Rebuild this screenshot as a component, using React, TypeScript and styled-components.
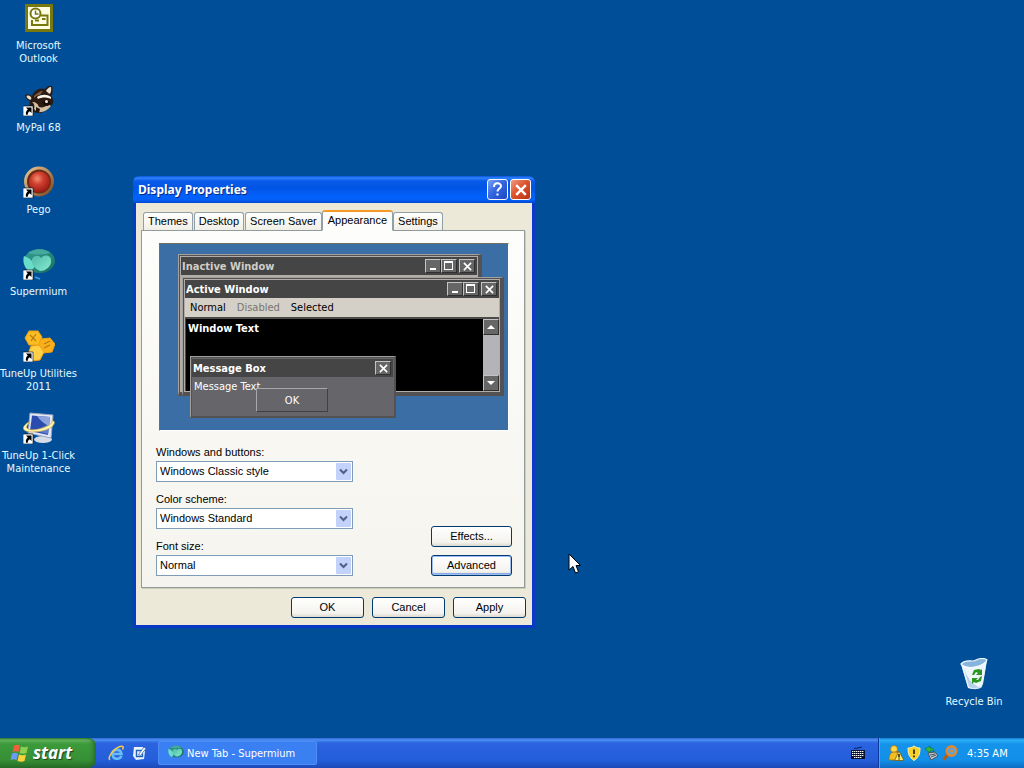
import React from 'react';
import styled, { createGlobalStyle, css } from 'styled-components';

const tahoma = '"DejaVu Sans Condensed", "DejaVu Sans", "Noto Sans", sans-serif';
const sans = '"Liberation Sans", Arial, sans-serif';
const caption = '"Noto Sans", "Open Sans", sans-serif';

const GlobalStyle = createGlobalStyle`
  *, *::before, *::after { box-sizing: border-box; }
  body { margin: 0; background: #004e98; }
  button, select { font: inherit; color: inherit; margin: 0; }
`;

const Screen = styled.div`
  min-height: 100vh;
  display: flex;
  flex-direction: column;
  background: #004e98;
  font: 11px/13px ${tahoma};
  overflow: hidden;
`;

const Desktop = styled.main`
  position: relative;
  flex: 1;
  display: flex;
  justify-content: space-between;
`;

/* ---------- desktop shortcuts ---------- */

const IconColumn = styled.div<{ $end?: boolean }>`
  display: flex;
  flex-direction: column;
  width: ${p => (p.$end ? 100 : 77)}px;
  padding-top: 2px;
  ${p => p.$end && css`
    justify-content: flex-end;
    padding-bottom: 30px;
    > button { height: auto; }
  `}
`;

const Shortcut = styled.button`
  display: flex;
  flex-direction: column;
  align-items: center;
  gap: 5px;
  height: 82px;
  padding: 0;
  border: 0;
  background: none;
  color: #e4fbff;
  text-align: center;
  white-space: pre-line;
`;

const ShortcutLabel = styled.span`
  display: block;
`;

const ShortcutArrow = () => (
  <g>
    <path d="M0 22h10v10H0z" fill="#fff" stroke="#000" strokeWidth="0.6" />
    <path d="M3 23.5h5.5v5.500l-1.800-1.800c-1.400 1-2 2-1.900 3.600H3c-.6-2.200 .3-3.900 1.800-5.300z" fill="#000" />
  </g>
);

const OutlookIcon = () => (
  <svg width="32" height="32" viewBox="0 0 32 32" aria-hidden="true">
    <path d="M3.500 3.500h25v25h-25z" fill="#fdfde4" stroke="#77790f" strokeWidth="3" />
    <circle cx="12.500" cy="11.500" r="5" fill="#fff" stroke="#77790f" strokeWidth="2" />
    <path d="M12.500 8.500v3.500h3" fill="none" stroke="#77790f" strokeWidth="1.500" />
    <path d="M18 13.500h6.500v9.500H9v-5" fill="none" stroke="#77790f" strokeWidth="2" />
    <path d="M12 18.500h4M19 17h3.500" fill="none" stroke="#77790f" strokeWidth="2" />
  </svg>
);

const RaccoonIcon = () => (
  <svg width="32" height="32" viewBox="0 0 32 32" aria-hidden="true">
    <path d="M2 11c3-2 5 0 7 1 2-6 8-9 13-7 2-3 5-4 7-3 1 4 1 8-1 10 3 3 3 7 0 10-3 5-12 9-17 6-4-2-5-7-4-11-3-1-5-3-5-6z" fill="#2b1b12" />
    <path d="M3.500 12c2-1 4 0 5 2l-1 2c-2-1-4-2-4-4zM23 7c1-2 3-4 5-4 .5 3 0 6-1.500 7z" fill="#eadfcb" />
    <path d="M11 12c3-3 6-5 9-5l-3 4c-2 0-4 1-6 3z" fill="#7a5c44" />
    <path d="M14 13c5-3 10-3 14 0v2c-4-2-9-2-13 0z" fill="#fff7e8" />
    <path d="M9 18c2 1 3 4 2 7l3 3c6 1 11-2 14-6l-3-2c-2 3-6 4-9 3-1-3-3-5-7-5z" fill="#d3c0a4" />
    <path d="M19 18c4-2 7-1 9 1l-3 3c-2 0-5-1-6-4z" fill="#170e0b" />
    <circle cx="23.500" cy="17.500" r="1.500" fill="#f5ead7" />
    <path d="M13 23l4 2-1 4-3-1z" fill="#24150e" />
    <ShortcutArrow />
  </svg>
);

const PegoIcon = () => (
  <svg width="32" height="32" viewBox="0 0 32 32" aria-hidden="true">
    <defs>
      <radialGradient id="redBall" cx=".4" cy=".34" r=".7">
        <stop stopColor="#f58e74" /><stop offset=".4" stopColor="#d04030" /><stop offset="1" stopColor="#94180f" />
      </radialGradient>
      <linearGradient id="wood" x2="1" y2="1">
        <stop stopColor="#e9cf9a" /><stop offset=".55" stopColor="#b08050" /><stop offset="1" stopColor="#6f4020" />
      </linearGradient>
    </defs>
    <circle cx="16" cy="15.500" r="15" fill="url(#wood)" />
    <circle cx="16" cy="15.500" r="12" fill="#6c2a14" />
    <circle cx="16.500" cy="16" r="10.500" fill="url(#redBall)" />
    <ShortcutArrow />
  </svg>
);

const Globe = ({ size, arrow }: { size: number; arrow?: boolean }) => (
  <svg width={size} height={size} viewBox="0 0 32 32" aria-hidden="true">
    <defs>
      <linearGradient id="teal" x2="1" y2="1">
        <stop stopColor="#2f9c96" /><stop offset=".7" stopColor="#23806f" /><stop offset="1" stopColor="#1b5f66" />
      </linearGradient>
      <linearGradient id="mint" y2="1">
        <stop stopColor="#4fb8a8" /><stop offset="1" stopColor="#86ecd0" />
      </linearGradient>
    </defs>
    <ellipse cx="16.500" cy="13" rx="15.500" ry="12" fill="url(#teal)" />
    <path d="M1 8c4 1 8 4 11 9-1 3-3 6-5 7C2 21-1 14 1 8z" fill="#6adcca" />
    <path d="M9 11c2-4 7-4 9-1 3-4 10-3 10 2 1 6-5 11-11 11-5-2-9-7-8-12z" fill="url(#mint)" />
    <path d="M5 5C12 0 22 0 27 5 20 7 11 7 5 5z" fill="#45a99c" />
    {arrow && <path d="M12 29l5 2" stroke="#38a0dc" strokeWidth="1.500" />}
    {arrow && <ShortcutArrow />}
  </svg>
);

const HexagonsIcon = () => (
  <svg width="32" height="32" viewBox="0 0 32 32" aria-hidden="true">
    <g stroke="#f0a010" strokeWidth="1" strokeLinejoin="round">
      <path d="M6 1h9l4 6-3 8H6L2 8z" fill="#fcbc24" />
      <path d="M18 9l9-1 5 6-3 8-9 1-5-7z" fill="#fbb01a" />
      <path d="M8 16l8-1 5 7-4 8-8 1-4-7z" fill="#ffd045" />
    </g>
    <path d="M7 5l6 6M13 4l-5 7M21 14l6-3M21 18l6-3" stroke="#b87a10" strokeWidth="1.200" />
    <ShortcutArrow />
  </svg>
);

const MonitorIcon = () => (
  <svg width="32" height="32" viewBox="0 0 32 32" aria-hidden="true">
    <ellipse cx="20" cy="27.500" rx="9" ry="3.500" fill="#d6dbe8" />
    <path d="M7 1l23 2-2 23L5 21z" fill="#e4e9f4" stroke="#9aa6c4" strokeWidth="1" />
    <path d="M9 3.500l18 1.500-2 18L7 19z" fill="#2a4cae" />
    <path d="M14 4l13 1-1 9c-5-2-9-6-12-10z" fill="#8ea4dc" />
    <path d="M13 19c5-4 9-5 13-6l-1 9z" fill="#5f7dd0" />
    <path d="M6 10c-9 5-7 10 3 10 10 0 20-3 22-8 1-2 0-3-2-4 1 3-2 5-7 7-7 3-16 4-18 1-1-1 0-3 2-5z" fill="#fff3ae" stroke="#c0a040" strokeWidth=".6" />
    <ShortcutArrow />
  </svg>
);

const RecycleIcon = () => (
  <svg width="32" height="32" viewBox="0 0 32 32" aria-hidden="true">
    <path d="M3 6l26-4-5 27c-4 3-10 3-14 0z" fill="#cfe3f2" />
    <path d="M3 6c6 5 19 4 26-4l-4 24c-3 4-11 6-15 4z" fill="#edf6fb" />
    <path d="M3 6C9 0 14 5 18 2c4-2 9-2 11 0-3 6-19 11-26 4z" fill="#86b4dc" stroke="#f2faff" strokeWidth="1.200" />
    <path d="M6 10l5 19c4 2 8 1 10 0C14 26 9 20 6 10z" fill="#b4d2e9" />
    <g fill="#2c9421">
      <path d="M14 17l2-5 5-1 2 1 1-1v6h-6l2-2-2-1-2 3z" />
      <path d="M24 18l-1 5-5 2-2-1-2 2 0-6h6l-2 2 2 0 2-3z" />
    </g>
  </svg>
);

/* ---------- dialog ---------- */

const Dialog = styled.section`
  position: absolute;
  left: 133px;
  top: 176px;
  width: 402px;
  padding: 0 3px 3px;
  border-radius: 6px 6px 0 0;
  background: #0939c6;
  font: 11px/13px ${sans};
  color: #000;
`;

const TitleBar = styled.header`
  display: flex;
  align-items: center;
  gap: 2px;
  height: 27px;
  margin: 0 -3px;
  padding: 0 4px 0 5px;
  border-radius: 6px 6px 0 0;
  background: linear-gradient(#0a53dc 0, #2d84fb 2px, #0a5ae8 5px, #0055e5 12px, #0261fb 20px, #0260f8 24px, #0147d0 27px);
`;

const Title = styled.h1`
  flex: 1;
  margin: 0;
  font: bold 12px/16px ${caption};
  color: #fff;
  text-shadow: 1px 1px 0 #0a2a85;
`;

const CaptionButton = styled.button<{ $close?: boolean }>`
  display: grid;
  place-items: center;
  width: 21px;
  height: 21px;
  padding: 0;
  border: 1px solid #fff;
  border-radius: 3px;
  background: ${p => (p.$close
    ? 'linear-gradient(135deg, #ee9a80, #dd5430 45%, #b93312)'
    : 'linear-gradient(135deg, #7da3f5, #3467e0 45%, #1c47c0)')};
`;

const DialogBody = styled.div`
  display: flex;
  flex-direction: column;
  padding: 7px 7px 7px 5px;
  background: #ece9d8;
`;

const Tabs = styled.div`
  display: flex;
  align-items: flex-end;
  gap: 1px;
  height: 21px;
  padding-left: 2px;
  margin-bottom: -1px;
`;

const Tab = styled.button<{ $active?: boolean }>`
  position: relative;
  height: 19px;
  padding: 0 4px;
  border: 1px solid #91a0a6;
  border-bottom-color: #919b9c;
  border-radius: 3px 3px 0 0;
  background: linear-gradient(#fff, #f0efe6);
  white-space: nowrap;
  ${p => p.$active && css`
    z-index: 1;
    height: 21px;
    margin: 0 -1px;
    padding: 0 5px 2px;
    border-top: 2px solid #f59a28;
    border-bottom-color: #fdfdfb;
    background: #fdfdfb;
  `}
`;

const Panel = styled.div`
  padding: 12px 12px 11px 14px;
  border: 1px solid #919b9c;
  box-shadow: 1px 1px 0 #d0ceb9;
  background: linear-gradient(#fdfdfb, #f5f4ee);
`;

const Preview = styled.div`
  position: relative;
  height: 188px;
  margin: 0 3px;
  border: 1px solid;
  border-color: #716f64 #fff #fff #716f64;
  background: #3a6ea5;
  font: 11px/13px ${tahoma};
  color: #fff;
`;

const MiniWindow = styled.div<{ $x: number; $y: number; $w: number; $h: number; $message?: boolean }>`
  position: absolute;
  left: ${p => p.$x}px;
  top: ${p => p.$y}px;
  width: ${p => p.$w}px;
  height: ${p => p.$h}px;
  display: flex;
  flex-direction: column;
  padding: 1px;
  border: 1px solid;
  border-width: ${p => (p.$message ? '1px 2px 2px 1px' : '1px 4px 4px 1px')};
  border-color: #a3a09d #545152 #545152 #a3a09d;
  background: ${p => (p.$message ? '#66666a' : '#b1aca7')};
  box-shadow: inset 1px 1px 0 #545152;
  ${p => p.$message && css`padding: 2px 1px 1px 1px;`}
  ${p => !p.$message && css`padding: 2px 1px 1px 2px;`}
`;

const MiniTitle = styled.div<{ $dim?: boolean }>`
  display: flex;
  align-items: center;
  flex: none;
  height: 18px;
  padding: 0 2px 0 1px;
  background: #454545;
  color: ${p => (p.$dim ? '#d0cdc8' : '#fff')};
  font-weight: bold;

  > span { flex: 1; }
`;

const MiniButton = styled.button<{ $gap?: boolean }>`
  display: grid;
  place-items: center;
  width: 16px;
  height: 14px;
  padding: 0;
  margin-left: ${p => (p.$gap ? 2 : 0)}px;
  border: 1px solid;
  border-color: #c4c4c4 #303030 #303030 #c4c4c4;
  background: #666;
`;

const MiniMenu = styled.div`
  display: flex;
  flex: none;
  align-items: center;
  gap: 11px;
  height: 19px;
  padding: 0 5px;
  background: #d4d0c8;
  color: #000;
`;

const Muted = styled.span`
  color: #77746e;
`;

const MiniClient = styled.div`
  flex: 1;
  display: flex;
  border-top: 2px solid #4c4a4b;
  border-left: 1px solid #4c4a4b;
  background: #000;
  font-weight: bold;
`;

const ClientText = styled.div`
  flex: 1;
  padding: 3px 2px;
`;

const ScrollBar = styled.div`
  display: flex;
  flex-direction: column;
  justify-content: space-between;
  width: 16px;
  background: #b4b4b8;
`;

const ScrollButton = styled(MiniButton)`
  height: 16px;
`;

const MessageBody = styled.div`
  display: flex;
  flex-direction: column;
  flex: 1;
  padding: 2px;
  line-height: 16px;
`;

const MessageButton = styled.button`
  position: absolute;
  left: 65px;
  top: 31px;
  width: 72px;
  height: 24px;
  padding: 0;
  border: 1px solid;
  border-color: #a8a8ac #404040 #404040 #a8a8ac;
  background: #66666a;
  color: #fff;
`;

const Options = styled.div`
  display: flex;
  justify-content: space-between;
  align-items: flex-end;
  margin-top: 13px;
`;

const Fields = styled.div`
  display: flex;
  flex-direction: column;
  gap: 9px;
  width: 197px;
`;

const Field = styled.div`
  display: flex;
  flex-direction: column;
`;

const FieldLabel = styled.label`
  height: 17px;
  line-height: 16px;
`;

const SelectBox = styled.div`
  display: grid;
  grid-template-columns: 1fr 17px;
  align-items: center;

  > select { grid-area: 1 / 1 / 2 / 3; }
  > svg { grid-area: 1 / 2; pointer-events: none; }
`;

const Select = styled.select`
  appearance: none;
  height: 21px;
  padding: 0 20px 0 3px;
  border: 1px solid #7f9db9;
  border-radius: 0;
  background: #fff;
`;

const ButtonStack = styled.div`
  display: flex;
  flex-direction: column;
  gap: 8px;
  width: 81px;
`;

const PushButton = styled.button<{ $focus?: boolean }>`
  height: 21px;
  padding: 0;
  border: 1px solid #003c74;
  border-radius: 3px;
  background: linear-gradient(#fff, #f4f3ee 80%, #dcd8cc);
  ${p => p.$focus && css`box-shadow: inset 0 0 0 1px #9dbcf0, inset 0 -2px 0 #8aabe8;`}
`;

const DialogActions = styled.footer`
  display: flex;
  justify-content: flex-end;
  gap: 8px;
  margin: 9px -1px 0 0;

  > button { width: 73px; }
`;

const CrossGlyph = ({ size, width }: { size: number; width: number }) => (
  <svg width={size} height={size} viewBox="0 0 10 10" aria-hidden="true">
    <path d="M1 1l8 8M9 1L1 9" stroke="#fff" strokeWidth={width} />
  </svg>
);

const MinimizeGlyph = () => (
  <svg width="12" height="10" aria-hidden="true"><path d="M3 7h6v2H3z" fill="#fff" /></svg>
);

const MaximizeGlyph = () => (
  <svg width="10" height="10" aria-hidden="true"><path d="M0 0h9v9H0zM1 2v6h7V2z" fill="#fff" fillRule="evenodd" /></svg>
);

const HelpGlyph = () => (
  <svg width="13" height="15" viewBox="0 0 13 15" aria-hidden="true">
    <path d="M3 5c0-5 7-4.500 7-1 0 2.500-3.500 2.500-3.500 5.500" fill="none" stroke="#fff" strokeWidth="2" />
    <path d="M5.500 11.500h2v2h-2z" fill="#fff" />
  </svg>
);

const Triangle = ({ up }: { up?: boolean }) => (
  <svg width="8" height="4" aria-hidden="true"><path d={up ? 'M4 0l4 4H0z' : 'M0 0h8L4 4z'} fill="#fff" /></svg>
);

const DropArrow = () => (
  <svg width="15" height="17" viewBox="0 0 15 17" aria-hidden="true">
    <rect width="15" height="17" rx="1" fill="#c3d2fb" />
    <path d="M4 6.500l3.500 3.500L11 6.500" fill="none" stroke="#4d6185" strokeWidth="2" />
  </svg>
);

const WindowButtons = () => (
  <>
    <MiniButton aria-label="Minimize"><MinimizeGlyph /></MiniButton>
    <MiniButton aria-label="Maximize"><MaximizeGlyph /></MiniButton>
    <MiniButton aria-label="Close" $gap><CrossGlyph size={9} width={1.8} /></MiniButton>
  </>
);

const Dropdown = ({ id, label, value }: { id: string; label: string; value: string }) => (
  <Field>
    <FieldLabel htmlFor={id}>{label}</FieldLabel>
    <SelectBox>
      <Select id={id} defaultValue={value}><option>{value}</option></Select>
      <DropArrow />
    </SelectBox>
  </Field>
);

const Pointer = styled.svg`
  position: absolute;
  left: 568px;
  top: 553px;
`;

/* ---------- taskbar ---------- */

const Taskbar = styled.nav`
  display: flex;
  height: 30px;
  background: linear-gradient(#3168d5 0, #4a90f5 2px, #2b63e0 5px, #245edb 22px, #1c49b8 30px);
  color: #fff;
`;

const StartButton = styled.button`
  display: flex;
  align-items: center;
  gap: 3px;
  width: 96px;
  padding: 0 0 1px 10px;
  border: 0;
  border-radius: 0 8px 8px 0;
  background: linear-gradient(#2f7c2d 0, #64b35f 2px, #3c9a3a 6px, #378f36 22px, #256b25 30px);
  box-shadow: inset -4px 0 4px -2px #24662a;
  font: italic bold 17px/20px ${caption};
  text-shadow: 1px 1px 1px #1c421c;
`;

const QuickLaunch = styled.div`
  display: flex;
  align-items: center;
  gap: 6px;
  width: 62px;
  padding-left: 12px;
`;

const QuickButton = styled.button`
  display: flex;
  padding: 0;
  border: 0;
  background: none;
`;

const TaskButton = styled.button`
  display: flex;
  align-items: center;
  gap: 3px;
  width: 159px;
  height: 24px;
  margin-top: 3px;
  padding: 0 9px;
  border: 1px solid #4d8df5;
  border-radius: 2px;
  background: #3b80f2;
  white-space: nowrap;
`;

const InputMethod = styled.div`
  display: flex;
  align-items: center;
  margin-left: auto;
  padding-right: 13px;
`;

const Tray = styled.div`
  display: flex;
  align-items: center;
  gap: 3px;
  width: 146px;
  padding-left: 9px;
  border-left: 1px solid #0b3a9c;
  box-shadow: inset 1px 0 0 #29b5f5;
  background: linear-gradient(#0f78d0 0, #2bb0f5 2px, #1592ea 6px, #128fe8 22px, #0f6cc4 30px);
`;

const Clock = styled.time`
  margin-left: 6px;
`;

const Flag = () => (
  <svg width="20" height="18" viewBox="0 0 20 18" aria-hidden="true">
    <path d="M4 1.500c2-1 4-1 6 0L8.500 8c-2-1-4-1-6 0z" fill="#f0603a" />
    <path d="M11 2.500c2.500 1 5 1 7 0L16.500 9c-2 1-4.500 1-7 0z" fill="#8ed04c" />
    <path d="M2 9.500c2-1 4-1 6 0L6.500 16c-2-1-4-1-6 0z" fill="#6b9bf2" />
    <path d="M9 10.500c2.500 1 5 1 7 0L14.500 17c-2 1-4.500 1-7 0z" fill="#fbd13e" />
  </svg>
);

const BrowserGlyph = () => (
  <svg width="17" height="17" viewBox="0 0 17 17" aria-hidden="true">
    <path d="M13.500 11c-2 4-9 4-9-2 0-5 8-6 9 0h-8" fill="none" stroke="#68bdf8" strokeWidth="2.600" />
    <path d="M2 15C-1 13 5 4 12 1.500c3-1 4 .5 2.500 3" fill="none" stroke="#f7cd45" strokeWidth="1.500" />
  </svg>
);

const MailGlyph = () => (
  <svg width="16" height="16" viewBox="0 0 16 16" aria-hidden="true">
    <path d="M3 2l9 0 2 4-1 8-8 1-3-4z" fill="#e9f4ff" />
    <path d="M10.500 5.500H5.500v6h6v-3" fill="none" stroke="#2161b7" strokeWidth="1.400" />
    <path d="M7.500 9.500l5.500-7.500 2 1.500-5.500 7z" fill="#fff" stroke="#2b5fae" strokeWidth=".8" />
  </svg>
);

const KeyboardGlyph = () => (
  <svg width="14" height="14" viewBox="0 0 14 14" aria-hidden="true">
    <path d="M3 3c1-2 2 0 4-1s2 0 4-1" fill="none" stroke="#0a1c50" />
    <path d="M0 4h14v9H0z" fill="#0a1230" />
    <path d="M1 5.500h12M1 7.500h12M1 9.500h12M3 11.500h8" stroke="#fff" strokeWidth="1" strokeDasharray="1.400 .6" />
  </svg>
);

const UserAlertGlyph = () => (
  <svg width="16" height="16" viewBox="0 0 16 16" aria-hidden="true">
    <circle cx="6" cy="4" r="3.500" fill="#ffd849" stroke="#9c6c00" strokeWidth=".7" />
    <path d="M1 15c0-6 2-8 6-8s6 3 6 8z" fill="#f4bc25" stroke="#9c6c00" strokeWidth=".7" />
    <path d="M11 6l5 9.500H6.500z" fill="#ffe763" stroke="#6d4d00" strokeWidth=".7" />
    <path d="M11 9v3.500M11 13.500v1" stroke="#000" strokeWidth="1.300" />
  </svg>
);

const ShieldGlyph = () => (
  <svg width="14" height="16" viewBox="0 0 14 16" aria-hidden="true">
    <path d="M7 1c2 1.500 4 2 6 2 0 6-1 9-6 12.500C2 12 1 9 1 3c2 0 4-.5 6-2z" fill="#f9d22b" stroke="#fff0a8" />
    <path d="M7 4.500V9M7 10.500v1.800" stroke="#252000" strokeWidth="1.600" />
  </svg>
);

const SafeRemoveGlyph = () => (
  <svg width="15" height="16" viewBox="0 0 15 16" aria-hidden="true">
    <path d="M4 8l7-1 3 4-7 4z" fill="#c8ccd0" stroke="#4b5560" />
    <path d="M6 10l5-1M7 12l5-2" stroke="#46505a" />
    <path d="M1 4l5-3v2c3 0 4 1 4 4-1-1-2-2-4-1v2z" fill="#36b83a" stroke="#10691c" strokeWidth=".6" />
  </svg>
);

const MagnifierGlyph = () => (
  <svg width="16" height="16" viewBox="0 0 16 16" aria-hidden="true">
    <path d="M6 9.500L1.500 14.500" stroke="#b85c12" strokeWidth="3" />
    <circle cx="9.500" cy="6" r="4.800" fill="#53a7e2" stroke="#e8862a" strokeWidth="2.400" />
    <circle cx="9.500" cy="6" r="1.500" fill="#e8862a" />
  </svg>
);

const shortcuts = [
  { label: 'Microsoft\nOutlook', icon: <OutlookIcon /> },
  { label: 'MyPal 68', icon: <RaccoonIcon /> },
  { label: 'Pego', icon: <PegoIcon /> },
  { label: 'Supermium', icon: <Globe size={32} arrow /> },
  { label: 'TuneUp Utilities\n2011', icon: <HexagonsIcon /> },
  { label: 'TuneUp 1-Click\nMaintenance', icon: <MonitorIcon /> },
];

const tabs = ['Themes', 'Desktop', 'Screen Saver', 'Appearance', 'Settings'];

export default function App() {
  return (
    <Screen>
      <GlobalStyle />
      <Desktop>
        <IconColumn>
          {shortcuts.map(s => (
            <Shortcut key={s.label}>{s.icon}<ShortcutLabel>{s.label}</ShortcutLabel></Shortcut>
          ))}
        </IconColumn>

        <Dialog aria-label="Display Properties">
          <TitleBar>
            <Title>Display Properties</Title>
            <CaptionButton aria-label="Help"><HelpGlyph /></CaptionButton>
            <CaptionButton aria-label="Close" $close><CrossGlyph size={12} width={2} /></CaptionButton>
          </TitleBar>
          <DialogBody>
            <Tabs role="tablist">
              {tabs.map(t => (
                <Tab key={t} role="tab" aria-selected={t === 'Appearance'} $active={t === 'Appearance'}>{t}</Tab>
              ))}
            </Tabs>
            <Panel role="tabpanel">
              <Preview>
                <MiniWindow $x={18} $y={10} $w={304} $h={142}>
                  <MiniTitle $dim><span>Inactive Window</span><WindowButtons /></MiniTitle>
                </MiniWindow>
                <MiniWindow $x={22} $y={33} $w={322} $h={119}>
                  <MiniTitle><span>Active Window</span><WindowButtons /></MiniTitle>
                  <MiniMenu><span>Normal</span><Muted>Disabled</Muted><span>Selected</span></MiniMenu>
                  <MiniClient>
                    <ClientText>Window Text</ClientText>
                    <ScrollBar>
                      <ScrollButton aria-label="Scroll up"><Triangle up /></ScrollButton>
                      <ScrollButton aria-label="Scroll down"><Triangle /></ScrollButton>
                    </ScrollBar>
                  </MiniClient>
                </MiniWindow>
                <MiniWindow $x={30} $y={112} $w={206} $h={62} $message>
                  <MiniTitle>
                    <span>Message Box</span>
                    <MiniButton aria-label="Close"><CrossGlyph size={9} width={1.8} /></MiniButton>
                  </MiniTitle>
                  <MessageBody>Message Text</MessageBody>
                  <MessageButton>OK</MessageButton>
                </MiniWindow>
              </Preview>
              <Options>
                <Fields>
                  <Dropdown id="style" label="Windows and buttons:" value="Windows Classic style" />
                  <Dropdown id="scheme" label="Color scheme:" value="Windows Standard" />
                  <Dropdown id="font" label="Font size:" value="Normal" />
                </Fields>
                <ButtonStack>
                  <PushButton>Effects...</PushButton>
                  <PushButton $focus>Advanced</PushButton>
                </ButtonStack>
              </Options>
            </Panel>
            <DialogActions>
              <PushButton>OK</PushButton>
              <PushButton>Cancel</PushButton>
              <PushButton>Apply</PushButton>
            </DialogActions>
          </DialogBody>
        </Dialog>

        <IconColumn $end>
          <Shortcut><RecycleIcon /><ShortcutLabel>Recycle Bin</ShortcutLabel></Shortcut>
        </IconColumn>

        <Pointer width="13" height="22" viewBox="0 0 13 22" aria-hidden="true">
          <path d="M1 1v16l4-3.500L7.500 20l3-1.300L8 12.500h4.500z" fill="#fff" stroke="#000" />
        </Pointer>
      </Desktop>

      <Taskbar>
        <StartButton><Flag />start</StartButton>
        <QuickLaunch>
          <QuickButton aria-label="Browser"><BrowserGlyph /></QuickButton>
          <QuickButton aria-label="Mail"><MailGlyph /></QuickButton>
        </QuickLaunch>
        <TaskButton><Globe size={16} />New Tab - Supermium</TaskButton>
        <InputMethod><KeyboardGlyph /></InputMethod>
        <Tray>
          <UserAlertGlyph />
          <ShieldGlyph />
          <SafeRemoveGlyph />
          <MagnifierGlyph />
          <Clock>4:35 AM</Clock>
        </Tray>
      </Taskbar>
    </Screen>
  );
}
